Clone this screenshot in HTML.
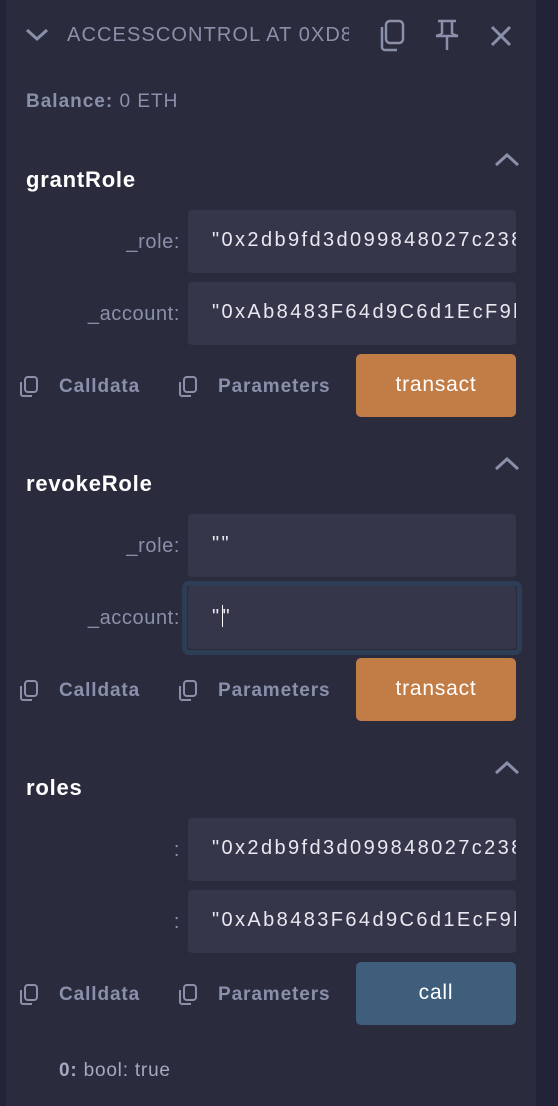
<!DOCTYPE html>
<html><head><style>
*{margin:0;padding:0;box-sizing:border-box}
body{width:558px;height:1106px;background:#222336;font-family:"Liberation Sans",sans-serif;position:relative;overflow:hidden}
.panel{position:absolute;left:6px;top:0;width:530px;height:1106px;background:#2a2c3e}
.a{position:absolute}
.hdr{left:67px;top:24px;font-size:20px;letter-spacing:1.1px;color:#8b90aa;width:282px;overflow:hidden;white-space:nowrap}
.bal{left:26px;top:91px;font-size:19px;letter-spacing:1px;color:#8b90aa}
.title{left:26px;font-size:22px;letter-spacing:0.8px;font-weight:bold;color:#fff}
.lbl{right:378px;font-size:20px;letter-spacing:0.6px;color:#8b90aa;text-align:right}
.inp{left:188px;width:328px;height:63px;background:#35364a;border-radius:4px;color:#e8e9f0;font-size:20px;letter-spacing:2.4px;padding:19px 0 0 24px;white-space:nowrap;overflow:hidden}
.btn{left:356px;width:160px;height:63px;border-radius:5px;color:#fff;font-size:21px;letter-spacing:0.8px;text-align:center;line-height:62px}
.or{background:#c27c46}.bl{background:#3f5e7c}
.cd{font-size:19px;letter-spacing:0.9px;font-weight:bold;color:#8b90aa}
</style></head><body>
<div class="panel"></div>
<svg class="a" style="left:25px;top:27px" width="24" height="16" viewBox="0 0 24 16"><path d="M2 3l10 9 10-9" fill="none" stroke="#8b90aa" stroke-width="3"/></svg>
<div class="a hdr">ACCESSCONTROL AT 0XD8</div>
<svg class="a" style="left:376px;top:19px" width="32" height="34" viewBox="0 0 32 34"><rect x="10" y="2" width="17" height="22" rx="4" fill="none" stroke="#8b90aa" stroke-width="2.5"/><path d="M6 8v20a3 3 0 0 0 3 3h12" fill="none" stroke="#8b90aa" stroke-width="2.5"/></svg>
<svg class="a" style="left:432px;top:18px" width="30" height="34" viewBox="0 0 30 34"><path d="M6 3h18M10 3v13M20 3v13M4 18h22M10 16l-6 2M20 16l6 2M15 18v14" fill="none" stroke="#8b90aa" stroke-width="2.5"/></svg>
<svg class="a" style="left:490px;top:25px" width="22" height="22" viewBox="0 0 22 22"><path d="M2 2l18 18M20 2L2 20" stroke="#8b90aa" stroke-width="3"/></svg>
<div class="a bal"><b>Balance:</b> 0 ETH</div>

<svg class="a" style="left:494px;top:152px" width="26" height="16" viewBox="0 0 26 16"><path d="M2 13l11-10 11 10" fill="none" stroke="#8b90aa" stroke-width="3"/></svg>
<div class="a title" style="top:167px">grantRole</div>
<div class="a lbl" style="top:231px">_role:</div>
<div class="a inp" style="top:210px">"0x2db9fd3d099848027c238</div>
<div class="a lbl" style="top:303px">_account:</div>
<div class="a inp" style="top:282px">"0xAb8483F64d9C6d1EcF9b</div>
<svg class="a" style="left:18px;top:375px" width="22" height="24" viewBox="0 0 22 24"><rect x="7" y="2" width="12" height="15" rx="3" fill="none" stroke="#8b90aa" stroke-width="2"/><path d="M3 7v12a2 2 0 0 0 2 2h9" fill="none" stroke="#8b90aa" stroke-width="2"/></svg>
<div class="a cd" style="left:59px;top:376px">Calldata</div>
<svg class="a" style="left:177px;top:375px" width="22" height="24" viewBox="0 0 22 24"><rect x="7" y="2" width="12" height="15" rx="3" fill="none" stroke="#8b90aa" stroke-width="2"/><path d="M3 7v12a2 2 0 0 0 2 2h9" fill="none" stroke="#8b90aa" stroke-width="2"/></svg>
<div class="a cd" style="left:218px;top:376px">Parameters</div>
<div class="a btn or" style="top:354px">transact</div>

<svg class="a" style="left:494px;top:456px" width="26" height="16" viewBox="0 0 26 16"><path d="M2 13l11-10 11 10" fill="none" stroke="#8b90aa" stroke-width="3"/></svg>
<div class="a title" style="top:471px">revokeRole</div>
<div class="a lbl" style="top:535px">_role:</div>
<div class="a inp" style="top:514px">""</div>
<div class="a lbl" style="top:607px">_account:</div>
<div class="a" style="left:182px;top:581px;width:340px;height:74px;border:5px solid #2c3d55;border-radius:7px"></div>
<div class="a inp" style="top:586px">"<span style="display:inline-block;width:1px;height:22px;background:#fff;vertical-align:-4px"></span>"</div>
<svg class="a" style="left:18px;top:679px" width="22" height="24" viewBox="0 0 22 24"><rect x="7" y="2" width="12" height="15" rx="3" fill="none" stroke="#8b90aa" stroke-width="2"/><path d="M3 7v12a2 2 0 0 0 2 2h9" fill="none" stroke="#8b90aa" stroke-width="2"/></svg>
<div class="a cd" style="left:59px;top:680px">Calldata</div>
<svg class="a" style="left:177px;top:679px" width="22" height="24" viewBox="0 0 22 24"><rect x="7" y="2" width="12" height="15" rx="3" fill="none" stroke="#8b90aa" stroke-width="2"/><path d="M3 7v12a2 2 0 0 0 2 2h9" fill="none" stroke="#8b90aa" stroke-width="2"/></svg>
<div class="a cd" style="left:218px;top:680px">Parameters</div>
<div class="a btn or" style="top:658px">transact</div>

<svg class="a" style="left:494px;top:760px" width="26" height="16" viewBox="0 0 26 16"><path d="M2 13l11-10 11 10" fill="none" stroke="#8b90aa" stroke-width="3"/></svg>
<div class="a title" style="top:775px">roles</div>
<div class="a lbl" style="top:839px">:</div>
<div class="a inp" style="top:818px">"0x2db9fd3d099848027c238</div>
<div class="a lbl" style="top:911px">:</div>
<div class="a inp" style="top:890px">"0xAb8483F64d9C6d1EcF9b</div>
<svg class="a" style="left:18px;top:983px" width="22" height="24" viewBox="0 0 22 24"><rect x="7" y="2" width="12" height="15" rx="3" fill="none" stroke="#8b90aa" stroke-width="2"/><path d="M3 7v12a2 2 0 0 0 2 2h9" fill="none" stroke="#8b90aa" stroke-width="2"/></svg>
<div class="a cd" style="left:59px;top:984px">Calldata</div>
<svg class="a" style="left:177px;top:983px" width="22" height="24" viewBox="0 0 22 24"><rect x="7" y="2" width="12" height="15" rx="3" fill="none" stroke="#8b90aa" stroke-width="2"/><path d="M3 7v12a2 2 0 0 0 2 2h9" fill="none" stroke="#8b90aa" stroke-width="2"/></svg>
<div class="a cd" style="left:218px;top:984px">Parameters</div>
<div class="a btn bl" style="top:962px">call</div>
<div class="a" style="left:59px;top:1060px;font-size:19px;letter-spacing:0.8px;color:#a5a9bf"><b>0:</b> bool: true</div>
</body></html>
